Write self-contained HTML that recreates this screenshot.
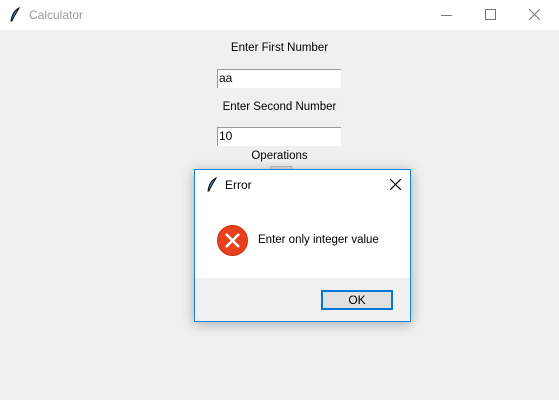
<!DOCTYPE html>
<html><head><style>
body{margin:0;width:559px;height:400px;background:#f0f0f0;font-family:"Liberation Sans",sans-serif;position:relative;overflow:hidden;font-size:12px;color:#000}
.a{position:absolute}
.lbl{position:absolute;left:0;width:559px;text-align:center}
.ent{position:absolute;left:217px;background:#fff;border-top:1px solid #999;border-left:1px solid #999;font-size:12px;line-height:17px;padding-left:1px;box-sizing:border-box;width:124px;height:19px}
</style></head><body>
<div class="a" style="left:0;top:0;width:559px;height:30px;background:#fff"></div>
<svg class="a" style="left:9px;top:7px" width="12" height="16" viewBox="0 0 12 16"><path d="M10 1 C6 3 3 7 2 14 L3 14 C5 9 8 5 10 1Z" fill="#4a7cc0" stroke="#111" stroke-width="1"/></svg>
<div class="a" style="left:29px;top:8px;color:#999;font-size:12px">Calculator</div>
<div class="a" style="left:441px;top:15px;width:11px;height:1px;background:#777"></div>
<div class="a" style="left:485px;top:9px;width:9px;height:9px;border:1px solid #777"></div>
<svg class="a" style="left:529px;top:9px" width="11" height="11"><path d="M0 0L11 11M11 0L0 11" stroke="#777" stroke-width="1"/></svg>
<div class="lbl" style="top:42px;font-size:11.5px">Enter First Number</div>
<div class="ent" style="top:69px">aa</div>
<div class="lbl" style="top:101px;font-size:11.5px">Enter Second Number</div>
<div class="ent" style="top:127px">10</div>
<div class="lbl" style="top:150px;font-size:11.5px">Operations</div>
<div class="a" style="left:270px;top:166px;width:20px;height:4px;background:#e0e0e0;border:1px solid #bbb"></div>
<div class="a" style="left:194px;top:169px;width:215px;height:151px;border:1px solid #1883d7;background:#fff;box-shadow:0 2px 12px rgba(0,0,0,.3)">
 <svg class="a" style="left:11px;top:7px" width="12" height="16" viewBox="0 0 12 16"><path d="M10 1 C6 3 3 7 2 14 L3 14 C5 9 8 5 10 1Z" fill="#4a7cc0" stroke="#111" stroke-width="1"/></svg>
 <div class="a" style="left:30px;top:8px">Error</div>
 <svg class="a" style="left:195px;top:9px" width="11" height="11"><path d="M0 0L11 11M11 0L0 11" stroke="#000" stroke-width="1.2"/></svg>
 <svg class="a" style="left:22px;top:55px" width="31" height="31"><circle cx="15.5" cy="15.5" r="15" fill="#e8401c" stroke="#c73010"/><path d="M9 9L22 22M22 9L9 22" stroke="#fff" stroke-width="2.5"/></svg>
 <div class="a" style="left:63px;top:64px;font-size:11.5px">Enter only integer value</div>
 <div class="a" style="left:0;top:108px;width:215px;height:43px;background:#f0f0f0"></div>
 <div class="a" style="left:126px;top:120px;width:72px;height:20px;box-sizing:border-box;border:2px solid #0078d7;background:#e1e1e1;text-align:center;line-height:16px">OK</div>
</div>
</body></html>
